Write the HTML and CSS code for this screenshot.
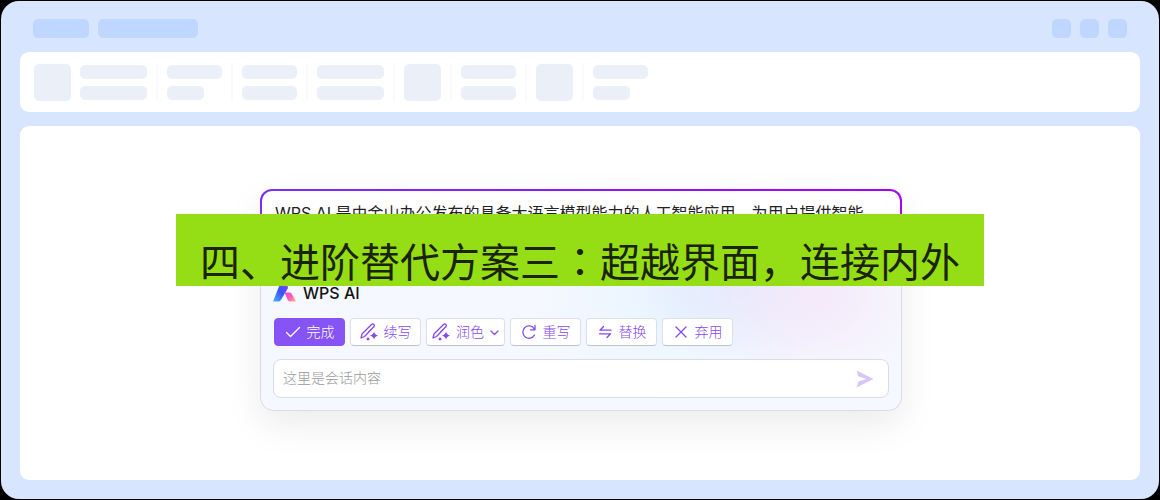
FILE: index.html
```
<!DOCTYPE html>
<html lang="zh-CN">
<head>
    <meta charset="UTF-8">
    <meta name="viewport" content="width=device-width, initial-scale=1.0">
    <title>WPS AI</title>
    <link rel="stylesheet" href="styles.css">
</head>
<body>

    <div class="window">
        <div class="titlebar">
            <span class="tab tab-small"></span>
            <span class="tab tab-large"></span>
            <div class="window-controls">
                <span class="control"></span>
                <span class="control"></span>
                <span class="control"></span>
            </div>
        </div>

        <div class="toolbar">
            <span class="block"></span>
            <div class="bars"><span class="bar long"></span><span class="bar long"></span></div>
            <span class="divider"></span>
            <div class="bars"><span class="bar"></span><span class="bar short"></span></div>
            <span class="divider"></span>
            <div class="bars"><span class="bar"></span><span class="bar"></span></div>
            <span class="divider"></span>
            <div class="bars"><span class="bar long"></span><span class="bar long"></span></div>
            <span class="divider"></span>
            <span class="block"></span>
            <span class="divider"></span>
            <div class="bars"><span class="bar"></span><span class="bar"></span></div>
            <span class="divider"></span>
            <span class="block"></span>
            <span class="divider"></span>
            <div class="bars"><span class="bar"></span><span class="bar short"></span></div>
        </div>

        <main class="document">
            <section class="assistant">
                <p class="answer">WPS AI 是由金山办公发布的具备大语言模型能力的人工智能应用，为用户提供智能</p>

                <div class="panel">
                    <div class="brand">
                        <svg class="logo" viewBox="0 0 24 22" aria-hidden="true">
                            <defs>
                                <linearGradient id="logo-blue" x1="1" y1="0" x2="0" y2="1">
                                    <stop offset="0" stop-color="#8a3cf5"/>
                                    <stop offset="0.5" stop-color="#3557f5"/>
                                    <stop offset="1" stop-color="#4fb4ff"/>
                                </linearGradient>
                                <linearGradient id="logo-pink" x1="0" y1="0" x2="1" y2="1">
                                    <stop offset="0" stop-color="#e344f0"/>
                                    <stop offset="0.55" stop-color="#ff5fae"/>
                                    <stop offset="1" stop-color="#ffb48a"/>
                                </linearGradient>
                            </defs>
                            <path d="M7 2h7l1 4-6.500 11Q7 19.500 5.500 19.500H0z" fill="url(#logo-blue)"/>
                            <path d="M11.500 10.500h5q1.500 0 2 1l4.500 8h-6q-1.500 0-2.500-2z" fill="url(#logo-pink)"/>
                        </svg>
                        <span>WPS AI</span>
                    </div>

                    <div class="actions">
                        <button class="action primary" type="button">
                            <svg class="icon" viewBox="0 0 16 16" aria-hidden="true"><path d="M1.500 8.500l4 4 9-9"/></svg>
                            <span>完成</span>
                        </button>
                        <button class="action" type="button">
                            <svg class="icon pen" viewBox="0 0 18 18" aria-hidden="true">
                                <path d="M1 15l1-4L11.500 1.500q1.300-1 2.300 0t0 2.300L4.500 13.500zM8.500 9l2.500-2.500"/>
                                <path class="solid" d="M14 8.500q.6 3 4 4-3.400 1-4 4-.6-3-4-4 3.400-1 4-4zM8 14.200l1.800 1.800L8 17.800 6.200 16z"/>
                            </svg>
                            <span>续写</span>
                        </button>
                        <button class="action" type="button">
                            <svg class="icon pen" viewBox="0 0 18 18" aria-hidden="true">
                                <path d="M1 15l1-4L11.500 1.500q1.300-1 2.300 0t0 2.300L4.500 13.500zM8.500 9l2.500-2.500"/>
                                <path class="solid" d="M14 8.500q.6 3 4 4-3.400 1-4 4-.6-3-4-4 3.400-1 4-4zM8 14.200l1.800 1.800L8 17.800 6.200 16z"/>
                            </svg>
                            <span>润色</span>
                            <svg class="chevron" viewBox="0 0 9 9" aria-hidden="true"><path d="M1 3l3.500 3.500L8 3"/></svg>
                        </button>
                        <button class="action" type="button">
                            <svg class="icon" viewBox="0 0 16 16" aria-hidden="true"><path d="M13.500 11A6.200 6.200 0 1 1 13.300 4.800M14 1.500v4.300H9.500"/></svg>
                            <span>重写</span>
                        </button>
                        <button class="action" type="button">
                            <svg class="icon" viewBox="0 0 16 16" aria-hidden="true"><path d="M6.500 2.500L3 6.200h11M2.500 9.800h11L10 13.500"/></svg>
                            <span>替换</span>
                        </button>
                        <button class="action" type="button">
                            <svg class="icon" viewBox="0 0 16 16" aria-hidden="true"><path d="M3 3l10 10M13 3L3 13"/></svg>
                            <span>弃用</span>
                        </button>
                    </div>

                    <form class="prompt">
                        <input class="prompt-input" type="text" placeholder="这里是会话内容" aria-label="会话内容">
                        <button class="send" type="button" aria-label="发送">
                            <svg viewBox="0 0 18 18" aria-hidden="true"><path d="M.5.500L17.500 9 .5 17.500 2.500 11.500 10.500 9 2.500 6.500z"/></svg>
                        </button>
                    </form>
                </div>
            </section>
        </main>
    </div>

    <h1 class="banner">四、进阶替代方案三<span class="colon" lang="zh-TW">：</span>超越界面，连接内外</h1>

</body>
</html>
```
FILE: styles.css
```
* {
    box-sizing: border-box;
}
body {
    position: relative;
    display: flex;
    min-height: 100vh;
    margin: 0;
    padding: 1px;
    background-color: #000;
    font-family: 'Inter', 'Noto Sans CJK SC', sans-serif;
}
.window {
    flex: 1;
    display: flex;
    flex-direction: column;
    gap: 14px;
    padding: 18px 19px 19px;
    border-radius: 18px;
    background-color: #d8e5ff;
}

/* window chrome */
.titlebar {
    display: flex;
    gap: 9px;
    padding: 0 13px;
}
.tab, .control {
    height: 19px;
    border-radius: 5px;
    background-color: #bfd7ff;
}
.tab-small {
    width: 56px;
}
.tab-large {
    width: 100px;
}
.window-controls {
    display: flex;
    gap: 9px;
    margin-left: auto;
}
.control {
    width: 19px;
}
.toolbar {
    display: flex;
    align-items: center;
    gap: 9px;
    height: 60px;
    padding: 0 14px;
    border-radius: 9px;
    background-color: #fff;
}
.block {
    width: 37px;
    height: 37px;
    border-radius: 5px;
    background-color: #ebeff8;
}
.bars {
    display: flex;
    flex-direction: column;
    gap: 7px;
}
.bar {
    width: 55px;
    height: 14px;
    border-radius: 5px;
    background-color: #ebeff8;
}
.bar.long {
    width: 67px;
}
.bar.short {
    width: 37px;
}
.divider {
    width: 2px;
    height: 37px;
    background-color: #f8fafd;
}

/* document and assistant card */
.document {
    flex: 1;
    padding: 63px 0 0 2px;
    border-radius: 9px;
    background-color: #fff;
}
.assistant {
    max-width: 642px;
    margin: 0 auto;
    border-radius: 14px;
    box-shadow: 0 14px 36px rgba(0, 0, 0, 0.08);
}
.answer {
    min-height: 72px;
    margin: 0;
    padding: 10px 13px;
    border: 2px solid transparent;
    border-radius: 12px 12px 0 0;
    background: linear-gradient(#fff, #fff) padding-box,
                linear-gradient(90deg, #7a2ff5, #a800f5) border-box;
    color: #222;
    font-size: 16px;
    line-height: 24px;
}
.panel {
    padding: 21px 12px 12px;
    border: 1px solid #d9dce6;
    border-top: 0;
    border-radius: 0 0 14px 14px;
    background: radial-gradient(ellipse 110px 90px at 87% 25%, #f5eafa, transparent),
                radial-gradient(ellipse 130px 90px at 77% 10%, #e3e6fc, transparent),
                radial-gradient(ellipse 150px 100px at 65% 30%, #e8f5ff, transparent),
                #f6f8ff;
}
.brand {
    display: flex;
    align-items: center;
    gap: 6px;
    height: 22px;
    color: #111;
    font-size: 16px;
    font-weight: 500;
}
.logo {
    width: 24px;
    height: 22px;
}
.actions {
    display: flex;
    gap: 5px;
    margin: 14px 1px 13px;
}
.action {
    display: flex;
    align-items: center;
    justify-content: center;
    gap: 6px;
    min-width: 71px;
    height: 28px;
    padding: 0 5px;
    border: 1px solid #dcdfe8;
    border-bottom-color: #bfc2cc;
    border-radius: 4px;
    background-color: #fff;
    color: #8549ef;
    font-family: inherit;
    font-size: 14px;
    font-weight: 300;
    line-height: 20px;
}
.action span {
    padding-bottom: 1px;
}
.action.primary {
    border-color: #8653f5;
    background-color: #8653f5;
    color: #fff;
}
.icon {
    width: 16px;
    height: 16px;
}
.icon.pen {
    width: 18px;
    height: 18px;
}
.chevron {
    width: 9px;
    height: 9px;
}
.icon, .chevron {
    fill: none;
    stroke: currentColor;
    stroke-width: 1.3;
    stroke-linecap: round;
    stroke-linejoin: round;
}
.icon .solid {
    fill: currentColor;
    stroke: none;
}
.prompt {
    display: flex;
    align-items: center;
    height: 39px;
    padding: 0 14px 0 9px;
    border: 1px solid #d9dce6;
    border-radius: 8px;
    background-color: #fff;
}
.prompt-input {
    flex: 1;
    min-width: 0;
    padding: 0 0 2px;
    border: 0;
    outline: 0;
    background: none;
    font-family: inherit;
    font-size: 14px;
    font-weight: 300;
}
.prompt-input::placeholder {
    color: #999;
}
.send {
    display: flex;
    padding: 0;
    border: 0;
    background: none;
}
.send svg {
    width: 18px;
    height: 18px;
    fill: #d8c5fc;
}

/* heading laid over the window */
.banner {
    position: absolute;
    top: 214px;
    left: 0;
    right: 0;
    width: fit-content;
    margin: 0 auto;
    padding: 26px 24px 0;
    background-color: #95de15;
    color: #1b2400;
    font-size: 40px;
    font-weight: 400;
    line-height: 46px;
}
/* full-width colon centred in its cell */
.colon {
    font-family: 'Noto Sans CJK TC', sans-serif;
    line-height: 1;
}
```
